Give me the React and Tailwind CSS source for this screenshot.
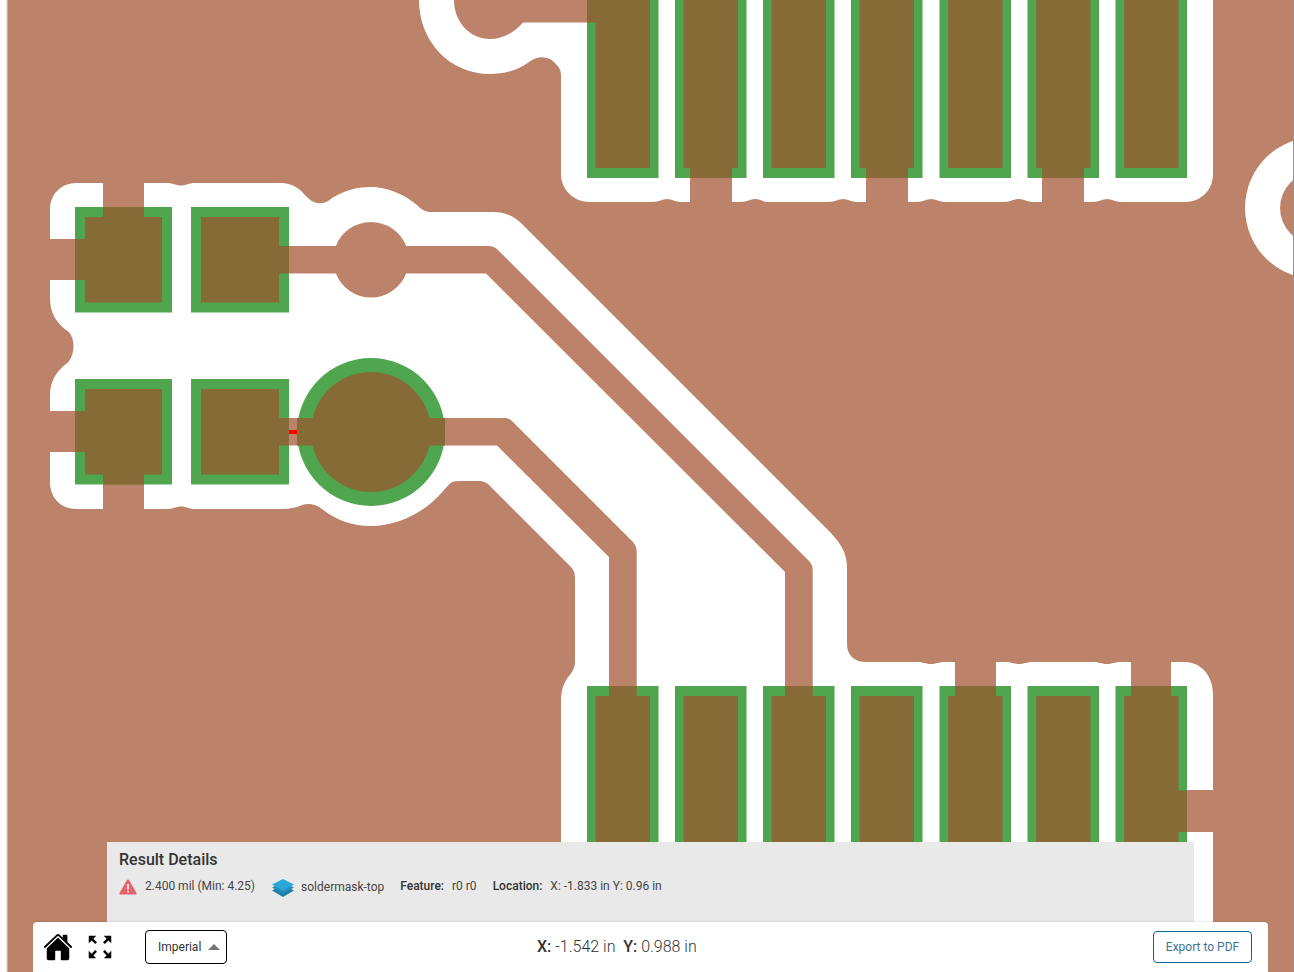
import { IoHome } from 'react-icons/io5';
import { MdZoomOutMap } from 'react-icons/md';

const COPPER = '#bc836a';
const GREEN = '#4fa64f';
const BROWN = '#866b37';

// small dimple in a horizontal clearance edge, drawn left to right or right to left
const dimple = (x, y, depth, dir = 1) =>
  `H${x - 14 * dir} C${x - 8 * dir} ${y} ${x - 5 * dir} ${y + depth} ${x} ${y + depth} C${x + 5 * dir} ${y + depth} ${x + 8 * dir} ${y} ${x + 14 * dir} ${y} `;

// clearance cut out of the copper pour
const clearanceLeft = `
M77 183 H103 V207 H144 V183 ${dimple(181, 183, 2.5)} H280
C296 183 302 192 308 198 C316 206 326 204 332 198 C345 190 358 187 371 187 C390 187 408 197 418 206 C424 212 428 212 434 212
H492 C506 212 514 216 524 226 L826 528 C840 542 847 552 847 568
V644 C847 655 854 662 866 662 ${dimple(931, 662, 2)} H955 V686 H996 V662 ${dimple(1019, 662, 2)} ${dimple(1107, 662, 2)} H1131 V686 H1171 V662 H1185
C1201 662 1213 676 1213 694 V790 H1187 V832 H1213 V972 H561 V702
C561 690 564 682 569 676 C573 671 575 668 575 660 V578 C575 572 573 569 570 566 L490 486 C485 481 482 481 476 481 H458 C450 481 448 486 444 490
C426 512 398 526 371 526 C352 526 336 520 322 509 C316 504 308 503 302 505 Q294 509 282 509 ${dimple(181, 509, -2.5, -1)} H144 V484 H103 V509 H77
C60 509 50 497 50 482 V452 H75 V411 H50 V396 C50 381 56 372 66 364 C75 358 77 336 66 330 C56 322 50 313 50 298 V280 H75 V239 H50 V210 C50 195 60 183 77 183 Z`;

const clearanceTop = `
M419 0 C419 42 450 74 490 74 C505 74 518 70 529 62 C538 55 549 56 555 63 C559 67 561 70 561 76
V174 C561 190 574 202 590 202 ${dimple(667, 202, -3)} H690 V178 H732 V202 ${dimple(755, 202, -3)} ${dimple(843, 202, -3)} H866 V178 H908 V202 ${dimple(931, 202, -3)} ${dimple(1019, 202, -3)} H1042 V178 H1084 V202 ${dimple(1107, 202, -3)} H1185 C1201 202 1213 190 1213 174 V0 Z`;

const padX = [587, 675, 763, 851, 939.5, 1027.5, 1115.5];
const smallPads = [
  [75, 207, 97, 105.5],
  [191, 207, 98, 105.5],
  [75, 379, 97, 105.5],
  [191, 379, 98, 105.5],
];

function Board() {
  return (
    <svg className="block" width="1294" height="972" viewBox="0 0 1294 972">
      <rect x="7" y="0" width="1286" height="972" fill={COPPER} />
      <rect x="6.5" y="0" width="1" height="972" fill="#d8d8d8" />

      <path d={clearanceLeft} fill="#fff" />
      <path d={clearanceTop} fill="#fff" />
      <path d="M454 0 C454 22 470 39 490 39 C503 39 515 32 523 22.6 H587 V0 Z" fill={COPPER} />
      <circle cx="1316" cy="208" r="71" fill="#fff" />
      <circle cx="1316" cy="208" r="36" fill={COPPER} />
      <rect x="1293" y="0" width="1" height="972" fill="#8f8f8f" />

      {/* traces */}
      <path d="M289 246 H335.9 A37.7 37.7 0 0 1 406.1 246 H488 Q494 246 498 250 L810 562 Q812.7 565 812.7 570 V686 H785 V572 L486 273.5 H406.1 A37.7 37.7 0 0 1 335.9 273.5 H289 Z" fill={COPPER} />
      <path d="M289 418 H504 Q509 418 512 421 L633 542 Q636.7 546 636.7 552 V686 H609 V557 L497 445.5 H289 Z" fill={COPPER} />

      {/* pads, mask over copper */}
      {padX.map((x) => (
        <g key={x}>
          <rect x={x} y="-10" width="71.5" height="188" fill={GREEN} />
          <rect x={x + 8.7} y="-10" width="54.3" height="178" fill={BROWN} />
        </g>
      ))}
      <rect x="587" y="0" width="10" height="22.6" fill={BROWN} />
      <rect x="690" y="168" width="42" height="10" fill={BROWN} />
      <rect x="866" y="168" width="42" height="10" fill={BROWN} />
      <rect x="1042" y="168" width="42" height="10" fill={BROWN} />

      {padX.map((x) => (
        <g key={x}>
          <rect x={x} y="686" width="71.5" height="170" fill={GREEN} />
          <rect x={x + 8.7} y="696" width="54.3" height="160" fill={BROWN} />
        </g>
      ))}
      <rect x="609" y="686" width="27.7" height="10" fill={BROWN} />
      <rect x="785" y="686" width="27.7" height="10" fill={BROWN} />
      <rect x="955" y="686" width="41" height="10" fill={BROWN} />
      <rect x="1131" y="686" width="40" height="10" fill={BROWN} />
      <rect x="1177" y="790.5" width="10" height="41.5" fill={BROWN} />

      {smallPads.map(([x, y, w, h]) => (
        <g key={`${x}-${y}`}>
          <rect x={x} y={y} width={w} height={h} fill={GREEN} />
          <rect x={x + 10} y={y + 10} width={w - 20} height={h - 20} fill={BROWN} />
        </g>
      ))}
      <rect x="103" y="207" width="41" height="10" fill={BROWN} />
      <rect x="75" y="239" width="10" height="41" fill={BROWN} />
      <rect x="279" y="246" width="10" height="27.5" fill={BROWN} />
      <rect x="103" y="474" width="41" height="10.5" fill={BROWN} />
      <rect x="75" y="411" width="10" height="41" fill={BROWN} />
      <rect x="279" y="418" width="10" height="27.5" fill={BROWN} />

      {/* big via */}
      <circle cx="371" cy="432" r="74" fill={GREEN} />
      <circle cx="371" cy="432" r="60" fill={BROWN} />
      <rect x="425" y="418" width="20" height="27.5" fill={BROWN} />
      <rect x="297" y="418" width="20" height="27.5" fill={BROWN} />
      <rect x="289" y="430" width="8" height="4" fill="#ff0000" />
    </svg>
  );
}

function LayerIcon() {
  return (
    <svg width="22" height="18" viewBox="0 0 22 18">
      <path d="M11 6 L22 11.5 L11 18 L0 11.5 Z" fill="#1b7fa6" />
      <path d="M11 3 L22 8.5 L11 14.5 L0 8.5 Z" fill="#2390bb" />
      <path d="M11 0 L22 5.5 L11 11.5 L0 5.5 Z" fill="#2ca6d6" />
    </svg>
  );
}

function WarnIcon() {
  return (
    <svg width="18" height="16" viewBox="0 0 18 16">
      <path d="M9 0.5 Q9.8 0.5 10.3 1.4 L17.5 14 Q18 15.5 16.5 15.5 H1.5 Q0 15.5 0.5 14 L7.7 1.4 Q8.2 0.5 9 0.5 Z" fill="#e5636b" />
      <rect x="8.2" y="5" width="1.6" height="5.5" fill="#fff" />
      <rect x="8.2" y="11.8" width="1.6" height="1.6" fill="#fff" />
    </svg>
  );
}

export default function App() {
  return (
    <div className="relative w-[1294px] h-[972px] overflow-hidden bg-white font-['Roboto',sans-serif]">
      <Board />

      <div className="absolute left-[33px] bottom-0 w-[1235px] flex flex-col">
        <div className="ml-[74px] w-[1087px] h-20 bg-[#e9e9e9] pl-3 pt-[8px]">
          <h2 className="text-base leading-5 font-medium text-[#333]">Result Details</h2>
          <div className="mt-[8px] flex items-start text-xs leading-4 text-[#444]">
            <span className="mt-[1px]"><WarnIcon /></span>
            <span className="ml-[8px]">2.400 mil (Min: 4.25)</span>
            <span className="ml-[17px] mt-[1px]"><LayerIcon /></span>
            <span className="ml-[7px] mt-[1px]">soldermask-top</span>
            <span className="ml-[16px] font-medium text-[#333]">Feature:</span>
            <span className="ml-[8px]">r0 r0</span>
            <span className="ml-[16px] font-medium text-[#333]">Location:</span>
            <span className="ml-[8px]">X: -1.833 in Y: 0.96 in</span>
          </div>
        </div>

        <div className="relative h-[50px] bg-white rounded-t shadow-[0_-1px_2px_rgba(0,0,0,0.08)] flex items-center pl-[10px] pr-4">
          <IoHome className="text-black w-[30px] h-[30px]" />
          <MdZoomOutMap className="ml-[12px] text-black w-[30px] h-[30px]" />
          <button className="ml-[30px] w-[82px] h-[34px] border border-black rounded flex items-center pl-[12px] gap-[7px] text-xs leading-4 text-[#333]">
            <span className="-mt-[1px]">Imperial</span>
            <span className="w-0 h-0 border-x-[6px] border-x-transparent border-b-[6px] border-b-[#777]" />
          </button>
          <div className="absolute left-[504px] top-[15px] text-base leading-5 font-light text-[#333] whitespace-pre">
            <span className="font-medium">X:</span> -1.542 in  <span className="font-medium">Y:</span> 0.988 in
          </div>
          <button className="ml-auto w-[99px] h-8 border border-[#00688f] rounded text-xs text-[#3f7396]">
            Export to PDF
          </button>
        </div>
      </div>
    </div>
  );
}
